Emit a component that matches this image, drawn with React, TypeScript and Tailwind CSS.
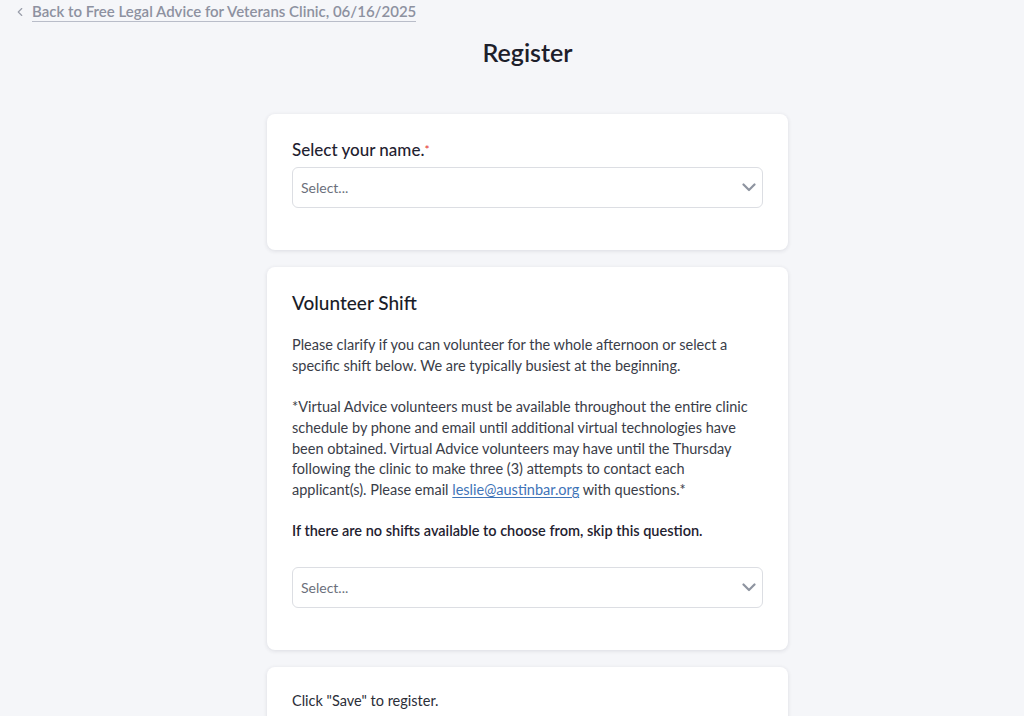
import { ChevronLeft } from "lucide-react";

function SelectBox() {
  return (
    <div className="flex h-[41px] items-center justify-between rounded-md border border-[#dcdee3] bg-white pl-[8px] pr-[6px]">
      <span className="text-[14px] text-[#6b6f7b]">Select...</span>
      <svg width="14" height="9" viewBox="0 0 14 9" fill="none">
        <path d="M1.5 1.5L7 7L12.5 1.5" stroke="#8e94a0" strokeWidth="2.2" strokeLinecap="round" strokeLinejoin="round" />
      </svg>
    </div>
  );
}

export default function App() {
  return (
    <div
      className="min-h-[716px] w-full bg-[#f5f6f9] text-[#2b2e38]"
      style={{ fontFamily: "Lato, 'Open Sans', sans-serif" }}
    >
      {/* Back link */}
      <div className="flex items-center gap-[5px] pl-[13px] pt-[2px]">
        <ChevronLeft className="h-[14px] w-[14px] text-[#9a9eab]" strokeWidth={2} />
        <a className="border-b border-[#b9bdc9] pb-[1px] text-[15px] font-semibold leading-[18px] text-[#8d91a0]">
          Back to Free Legal Advice for Veterans Clinic, 06/16/2025
        </a>
      </div>

      <div className="pl-[31px]">
        <h1 className="mt-[15px] text-center text-[25px] font-semibold leading-[30px] text-[#1d202b]">
          Register
        </h1>

        <div className="mx-auto mt-[47px] flex w-[521px] flex-col gap-[17px]">
          {/* Name card */}
          <div className="rounded-lg bg-white px-[25px] pb-[42px] pt-[26px] shadow-[0_1px_4px_rgba(30,35,60,0.12)]">
            <label className="block text-[17px] font-medium leading-[20px] text-[#1f2230]">
              Select your name.<span className="align-top text-[12px] text-[#e53935]">*</span>
            </label>
            <div className="mt-[7px]">
              <SelectBox />
            </div>
          </div>

          {/* Volunteer shift card */}
          <div className="rounded-lg bg-white px-[25px] pb-[42px] pt-[25px] shadow-[0_1px_4px_rgba(30,35,60,0.12)]">
            <h2 className="text-[19px] font-medium leading-[22px] text-[#1a1d28]">Volunteer Shift</h2>
            <div className="mt-[21px] text-[14.5px] leading-[20.7px] text-[#3a3d48]">
              <p>
                Please clarify if you can volunteer for the whole afternoon or select a<br />
                specific shift below. We are typically busiest at the beginning.
              </p>
              <p className="mt-[20.7px]">
                *Virtual Advice volunteers must be available throughout the entire clinic<br />
                schedule by phone and email until additional virtual technologies have<br />
                been obtained. Virtual Advice volunteers may have until the Thursday<br />
                following the clinic to make three (3) attempts to contact each<br />
                applicant(s). Please email{" "}
                <a className="text-[#3f74b8] underline underline-offset-2">leslie@austinbar.org</a> with
                questions.*
              </p>
              <p className="mt-[20.7px] font-semibold text-[#1f2230]">
                If there are no shifts available to choose from, skip this question.
              </p>
            </div>
            <div className="mt-[25px]">
              <SelectBox />
            </div>
          </div>

          {/* Save card */}
          <div className="rounded-lg bg-white px-[25px] pb-[40px] pt-[23px] shadow-[0_1px_4px_rgba(30,35,60,0.12)]">
            <p className="text-[14.5px] leading-[21px] text-[#2b2e38]">Click "Save" to register.</p>
          </div>
        </div>
      </div>
    </div>
  );
}
